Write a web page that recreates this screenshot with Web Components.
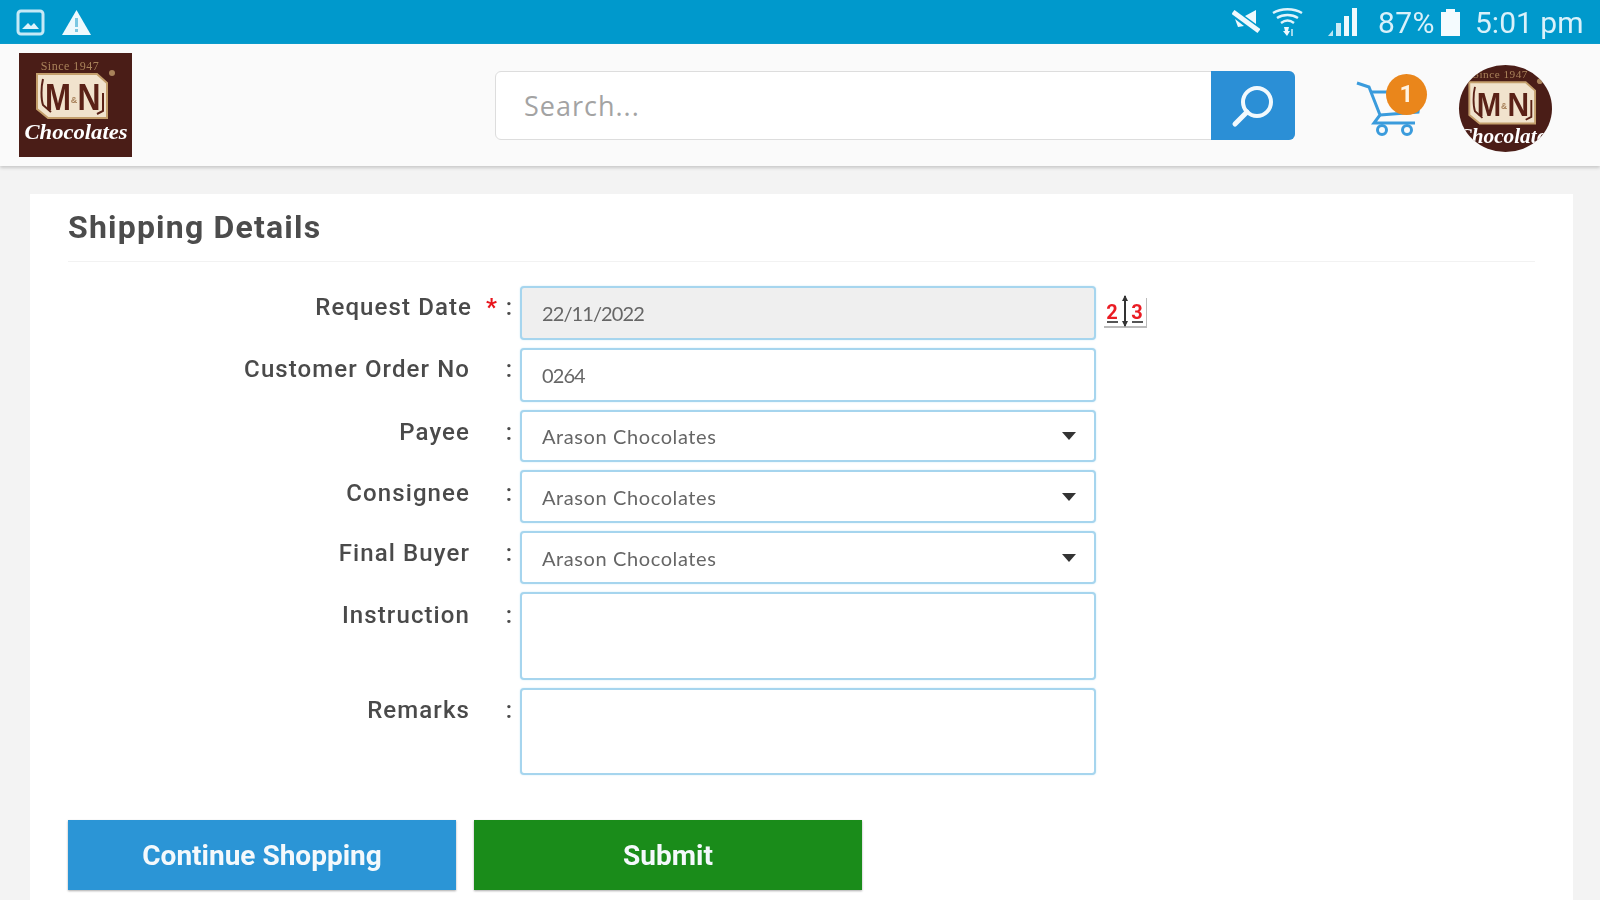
<!DOCTYPE html>
<html>
<head>
<meta charset="utf-8">
<title>Shipping Details</title>
<style>
    html, body { margin: 0; height: 900px; overflow: hidden; background: #f3f3f3; font-family: Roboto, "Liberation Sans", sans-serif; }
    /* the source is a soft, upscaled phone capture */
    status-bar, app-header, shipping-card { filter: blur(.45px); }
</style>
</head>
<body>
<status-bar></status-bar>
<app-header></app-header>
<shipping-card>
    <form-row label="Request Date" required style="--row: 54px">
        <field-box value="22/11/2022" disabled style="--track: -.9px"></field-box>
        <date-icon slot="after"></date-icon>
    </form-row>
    <form-row label="Customer Order No" style="--row: 54px"><field-box value="0264" style="--track: -.9px"></field-box></form-row>
    <form-row label="Payee" style="--row: 52px; --label-top: 7px"><field-box value="Arason Chocolates" select></field-box></form-row>
    <form-row label="Consignee" style="--row: 53px; --label-top: 8px"><field-box value="Arason Chocolates" select></field-box></form-row>
    <form-row label="Final Buyer" style="--row: 53px; --label-top: 7px"><field-box value="Arason Chocolates" select></field-box></form-row>
    <form-row label="Instruction" style="--row: 88px; --label-top: 8px"><field-box></field-box></form-row>
    <form-row label="Remarks" style="--row: 87px; --label-top: 7px"><field-box></field-box></form-row>
    <action-button slot="actions" color="#2b95d6">Continue Shopping</action-button>
    <action-button slot="actions" color="#1a8c1a">Submit</action-button>
</shipping-card>

<script>
const logoArt = `
    <text x="51" y="17" text-anchor="middle" font-family="Liberation Serif" font-size="12" letter-spacing=".5" fill="#a9825a">Since 1947</text>
    <path d="M18 21h60l10 9v35H29l-11-9z" fill="#f1e3cd" stroke="#c49f6c" stroke-width="2"/>
    <path d="M24 26c-2 8-2 20 0 26l8 7M84 40v18l-6 3" fill="none" stroke="#5a2116" stroke-width="2"/>
    <text x="39" y="57" text-anchor="middle" font-family="Liberation Sans" font-weight="700" font-size="36" textLength="26" lengthAdjust="spacingAndGlyphs" fill="#5a2116">M</text>
    <text x="55" y="50" text-anchor="middle" font-family="Liberation Sans" font-weight="700" font-size="9" fill="#a9825a">&amp;</text>
    <text x="70" y="57" text-anchor="middle" font-family="Liberation Sans" font-weight="700" font-size="36" textLength="23" lengthAdjust="spacingAndGlyphs" fill="#5a2116">N</text>
    <circle cx="93" cy="20" r="3" fill="#a9825a"/>
    <text x="57" y="86" text-anchor="middle" font-family="Liberation Serif" font-style="italic" font-weight="700" font-size="22" textLength="103" lengthAdjust="spacingAndGlyphs" fill="#fff">Chocolates</text>`;

class StatusBar extends HTMLElement {
    constructor() {
        super();
        this.attachShadow({ mode: 'open' });
        this.shadowRoot.innerHTML = `
            <style>
                :host {
                    display: flex;
                    align-items: center;
                    height: 44px;
                    padding: 0 15px 0 16px;
                    box-sizing: border-box;
                    background: #0099cc;
                    color: #d9f1fa;
                    font: 400 30px Roboto, sans-serif;
                }
                svg { display: block; }
                .left { display: flex; gap: 17px; align-items: center; }
                .right { margin-left: auto; display: flex; align-items: center; }
                .pct { margin-left: 21px; width: 55px; white-space: nowrap; letter-spacing: .4px; }
                .time { margin-left: 15px; width: 110px; white-space: nowrap; }
            </style>
            <div class="left">
                <svg width="29" height="27" viewBox="0 0 29 27"><rect x="2" y="2" width="25" height="23" rx="3" fill="none" stroke="#c6e9f6" stroke-width="3"/><path d="M6 20l6-6 3 3 3-3 5 6z" fill="#dff3fb"/></svg>
                <svg width="29" height="27" viewBox="0 0 29 27"><path d="M14.5 1L29 26H0z" fill="#eef9fd"/><rect x="13" y="9" width="3" height="9" fill="#7cc7e2"/><rect x="13" y="20" width="3" height="3" fill="#7cc7e2"/></svg>
            </div>
            <div class="right">
                <svg width="28" height="24" viewBox="0 0 28 24" fill="#eef9fd"><path d="M1 2l26 19" stroke="#eef9fd" stroke-width="5"/><path d="M13 6L24 0v14zM3 9l9 7-6 1z"/></svg>
                <svg style="margin-left:12px" width="31" height="28" viewBox="0 0 31 28"><g fill="none" stroke="#dff3fb" stroke-width="2.4"><path d="M1 5c8-5 21-5 29 0"/><path d="M5 10c6-4 15-4 21 0"/><path d="M9 15c4-3 9-3 13 0"/></g><path d="M12 19h5l-1 4h2l-3 5-4-5h2z" fill="#eef9fd"/><path d="M19 21h2v7h-2z" fill="#9ed8ec"/></svg>
                <svg style="margin-left:25px" width="29" height="28" viewBox="0 0 29 28" fill="#eef9fd"><path d="M0 28l5-6v6z" opacity=".8"/><rect x="8" y="15" width="5" height="13" opacity=".85"/><rect x="16" y="8" width="5" height="20"/><rect x="24" y="0" width="5" height="28"/></svg>
                <span class="pct">87%</span>
                <svg style="margin-left:8px" width="19" height="27" viewBox="0 0 19 27"><path d="M5 0h9v3h5v24H0V3h5z" fill="#f4fbfe"/></svg>
                <span class="time">5:01 pm</span>
            </div>
        `;
    }
}
customElements.define('status-bar', StatusBar);

class BrandLogo extends HTMLElement {
    constructor() {
        super();
        this.attachShadow({ mode: 'open' });
        const round = this.hasAttribute('round');
        this.shadowRoot.innerHTML = `
            <style>
                :host {
                    display: block;
                    width: ${round ? 93 : 113}px;
                    height: ${round ? 87 : 104}px;
                    background: #4a1d17;
                    overflow: hidden;
                    ${round ? 'border-radius: 50%;' : ''}
                }
                svg { display: block; width: 100%; height: 100%; filter: blur(.4px); }
            </style>
            <svg viewBox="${round ? '7 3 99 92' : '0 0 113 104'}">${logoArt}</svg>
        `;
    }
}
customElements.define('brand-logo', BrandLogo);

class SearchBox extends HTMLElement {
    constructor() {
        super();
        this.attachShadow({ mode: 'open' });
        this.shadowRoot.innerHTML = `
            <style>
                :host {
                    display: flex;
                    width: 800px;
                    height: 69px;
                    box-sizing: border-box;
                    background: #fff;
                    border: 1px solid #ddd;
                    border-radius: 6px;
                }
                .placeholder {
                    flex: 1;
                    align-self: center;
                    padding-left: 28px;
                    color: #a3a3a3;
                    font: 400 27px "Open Sans", sans-serif;
                    letter-spacing: 1px;
                }
                .go {
                    display: flex;
                    align-items: center;
                    justify-content: center;
                    width: 84px;
                    margin: -1px;
                    background: #2b8fd6;
                    border-radius: 0 6px 6px 0;
                }
            </style>
            <div class="placeholder">Search...</div>
            <div class="go">
                <svg width="46" height="46" viewBox="0 0 46 46" fill="none" stroke="#f2f9fd"><circle cx="27" cy="19" r="14" stroke-width="4"/><path d="M17 29L5 41" stroke-width="5" stroke-linecap="round"/></svg>
            </div>
        `;
    }
}
customElements.define('search-box', SearchBox);

class CartButton extends HTMLElement {
    constructor() {
        super();
        this.attachShadow({ mode: 'open' });
        this.shadowRoot.innerHTML = `
            <style>
                :host { display: block; position: relative; width: 70px; height: 62px; }
                svg { display: block; overflow: visible; }
                .badge {
                    position: absolute;
                    right: 0;
                    top: -1px;
                    width: 41px;
                    height: 41px;
                    border-radius: 50%;
                    background: #ea861b;
                    color: #fff3e2;
                    font: 700 24px/41px Roboto, sans-serif;
                    text-align: center;
                }
            </style>
            <svg width="70" height="62" viewBox="0 0 70 62" fill="none" stroke="#3a9bdc" stroke-width="3">
                <path d="M0 8l12 4 11 28-6 8h41"/>
                <path d="M14 17h50l-3 20-38 3"/>
                <circle cx="25" cy="55" r="4.5"/>
                <circle cx="50" cy="55" r="4.5"/>
            </svg>
            <div class="badge">1</div>
        `;
    }
}
customElements.define('cart-button', CartButton);

class AppHeader extends HTMLElement {
    constructor() {
        super();
        this.attachShadow({ mode: 'open' });
        this.shadowRoot.innerHTML = `
            <style>
                :host {
                    display: flex;
                    align-items: flex-start;
                    height: 122px;
                    box-sizing: border-box;
                    background: #fafafa;
                    box-shadow: 0 2px 3px #c9c9c9;
                    position: relative;
                }
                brand-logo { margin: 9px 0 0 19px; }
                search-box { margin: 27px 0 0 363px; }
                cart-button { margin: 31px 0 0 62px; }
                brand-logo[round] { margin: 21px 0 0 32px; }
            </style>
            <brand-logo></brand-logo>
            <search-box></search-box>
            <cart-button></cart-button>
            <brand-logo round></brand-logo>
        `;
    }
}
customElements.define('app-header', AppHeader);

class ShippingCard extends HTMLElement {
    constructor() {
        super();
        this.attachShadow({ mode: 'open' });
        this.shadowRoot.innerHTML = `
            <style>
                :host {
                    display: block;
                    margin: 28px 27px 0 30px;
                    height: 720px;
                    padding: 0 38px;
                    background: #fff;
                    color: #444;
                }
                h2 {
                    margin: 0;
                    height: 68px;
                    box-sizing: border-box;
                    padding-top: 14px;
                    font: 700 32px/38px Roboto, sans-serif;
                    color: #4c4c4c;
                    border-bottom: 1px solid #f2f2f2;
                    letter-spacing: 1.2px;
                }
                .rows { display: grid; gap: 8px; margin-top: 24px; }
                .actions { display: flex; gap: 18px; margin-top: 45px; }
            </style>
            <h2>Shipping Details</h2>
            <div class="rows"><slot></slot></div>
            <div class="actions"><slot name="actions"></slot></div>
        `;
    }
}
customElements.define('shipping-card', ShippingCard);

class FormRow extends HTMLElement {
    constructor() {
        super();
        this.attachShadow({ mode: 'open' });
        this.shadowRoot.innerHTML = `
            <style>
                :host {
                    display: grid;
                    grid-template-columns: 430px 22px 576px auto;
                    height: var(--row, 54px);
                }
                .label, .colon {
                    padding-top: var(--label-top, 6px);
                    font: 500 24px/30px Roboto, sans-serif;
                    color: #4a4a4a;
                }
                .label {
                    box-sizing: border-box;
                    padding-right: 14px;
                    text-align: right;
                    letter-spacing: 1.1px;
                    white-space: nowrap;
                }
                :host([required]) .label { padding-right: 0; }
                .star { color: #e8141c; font-weight: 700; margin-left: 14px; }
                .colon { text-align: center; }
                .after { padding-left: 8px; }
            </style>
            <div class="label"><span id="text"></span><span class="star" id="star"></span></div>
            <div class="colon">:</div>
            <slot></slot>
            <div class="after"><slot name="after"></slot></div>
        `;
    }

    connectedCallback() {
        this.shadowRoot.getElementById('text').textContent = this.getAttribute('label');
        if (this.hasAttribute('required')) {
            this.shadowRoot.getElementById('star').textContent = '*';
        }
    }
}
customElements.define('form-row', FormRow);

class FieldBox extends HTMLElement {
    constructor() {
        super();
        this.attachShadow({ mode: 'open' });
        this.shadowRoot.innerHTML = `
            <style>
                :host {
                    display: flex;
                    align-items: center;
                    box-sizing: border-box;
                    height: 100%;
                    padding: 0 18px 0 20px;
                    background: #fff;
                    border: 2px solid #a6d5ee;
                    border-radius: 4px;
                    box-shadow: 0 0 2px #cfeaf7;
                    color: #666;
                    font: 400 20px Lato, sans-serif;
                    letter-spacing: var(--track, .6px);
                }
                :host([disabled]) { background: #efefef; }
                .text { flex: 1; }
                .caret {
                    display: none;
                    width: 0;
                    height: 0;
                    border: 7px solid transparent;
                    border-top: 8px solid #333;
                    border-bottom: 0;
                }
                :host([select]) .caret { display: block; }
            </style>
            <span class="text" id="value"></span>
            <span class="caret"></span>
        `;
    }

    connectedCallback() {
        this.shadowRoot.getElementById('value').textContent = this.getAttribute('value') || '';
    }
}
customElements.define('field-box', FieldBox);

class DateIcon extends HTMLElement {
    constructor() {
        super();
        this.attachShadow({ mode: 'open' });
        this.shadowRoot.innerHTML = `
            <style>
                :host { display: block; margin-top: 9px; width: 43px; height: 33px; }
                svg { display: block; }
            </style>
            <svg width="43" height="33" viewBox="0 0 43 33">
                <path d="M0 32h43V3" fill="none" stroke="#bbb" stroke-width="2"/>
                <path d="M21 1v30" stroke="#333" stroke-width="2"/>
                <path d="M21 0l-3 6h6zM21 32l-3-6h6z" fill="#333"/>
                <text x="8" y="24" text-anchor="middle" font-family="Roboto" font-weight="700" font-size="20" fill="#ea1c24">2</text>
                <text x="33" y="24" text-anchor="middle" font-family="Roboto" font-weight="700" font-size="20" fill="#ea1c24">3</text>
                <path d="M3 27h11M28 27h11" stroke="#555" stroke-width="2"/>
            </svg>
        `;
    }
}
customElements.define('date-icon', DateIcon);

class ActionButton extends HTMLElement {
    constructor() {
        super();
        this.attachShadow({ mode: 'open' });
        this.shadowRoot.innerHTML = `
            <style>
                :host {
                    display: flex;
                    align-items: center;
                    justify-content: center;
                    width: 388px;
                    height: 70px;
                    color: #f4f9fc;
                    font: 700 28px Roboto, sans-serif;
                    box-shadow: 0 1px 2px #aaa;
                }
            </style>
            <slot></slot>
        `;
        this.style.background = this.getAttribute('color');
    }
}
customElements.define('action-button', ActionButton);
</script>
</body>
</html>
